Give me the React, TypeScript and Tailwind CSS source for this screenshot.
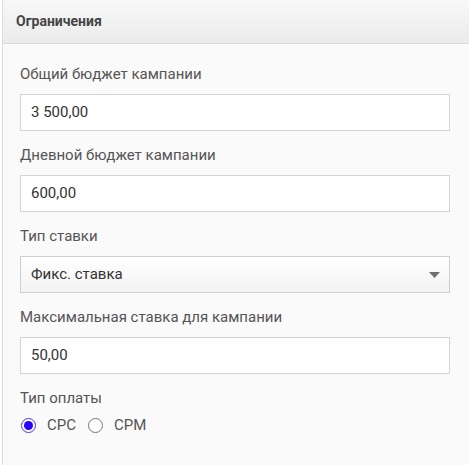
import React from "react";

const fields = [
  { label: "Общий бюджет кампании", value: "3 500,00" },
  { label: "Дневной бюджет кампании", value: "600,00" },
];

function Label({ children }: { children: React.ReactNode }) {
  return <div className="text-[15px] leading-[18px] text-[#555] mb-[11px]">{children}</div>;
}

function Field({ label, value }: { label: string; value: string }) {
  return (
    <div className="flex flex-col">
      <Label>{label}</Label>
      <div className="h-[37px] border border-[#d4d4d4] bg-white flex items-center px-[10px] text-[15px] text-[#333]">
        {value}
      </div>
    </div>
  );
}

function Radio({ checked, label }: { checked?: boolean; label: string }) {
  return (
    <label className="flex items-center gap-[11px]">
      {checked ? (
        <span className="w-[15px] h-[15px] rounded-full border border-[#3b3bf5] flex items-center justify-center bg-white">
          <span className="w-[9px] h-[9px] rounded-full bg-[#2a00ff]" />
        </span>
      ) : (
        <span className="w-[15px] h-[15px] rounded-full border border-[#767676] bg-white" />
      )}
      <span className="text-[15px] leading-[20px] text-[#555]">{label}</span>
    </label>
  );
}

export default function App() {
  return (
    <div
      className="w-[469px] h-[465px] overflow-hidden bg-white"
      style={{ fontFamily: "Roboto, 'Noto Sans', sans-serif" }}
    >
      <div className="ml-[2px] w-[480px] h-[465px] border-l border-[#dcdcdc] bg-[#fafafa]">
        <div className="h-[44px] border-b border-[#d9d9d9] bg-gradient-to-b from-[#f8f8f8] to-[#ebebeb] flex items-center pl-[13px]">
          <span className="text-[14px] font-bold text-[#444]">Ограничения</span>
        </div>
        <div className="pl-[17px] pt-[21px] w-[447px] flex flex-col gap-[15px]">
          {fields.map((f) => (
            <Field key={f.label} {...f} />
          ))}
          <div className="flex flex-col">
            <Label>Тип ставки</Label>
            <div className="h-[37px] border border-[#cfcfcf] bg-gradient-to-b from-white to-[#f2f2f2] flex items-center justify-between pl-[10px] pr-[9px] text-[15px] text-[#333]">
              <span>Фикс. ставка</span>
              <svg width="11" height="6" viewBox="0 0 11 6">
                <path d="M0 0 H11 L5.5 6 Z" fill="#707070" />
              </svg>
            </div>
          </div>
          <Field label="Максимальная ставка для кампании" value="50,00" />
          <div className="flex flex-col">
            <div className="text-[15px] leading-[18px] text-[#555]">Тип оплаты</div>
            <div className="flex items-center gap-[12px] pl-[1px] mt-[8px]">
              <Radio checked label="CPC" />
              <Radio label="CPM" />
            </div>
          </div>
        </div>
      </div>
    </div>
  );
}
